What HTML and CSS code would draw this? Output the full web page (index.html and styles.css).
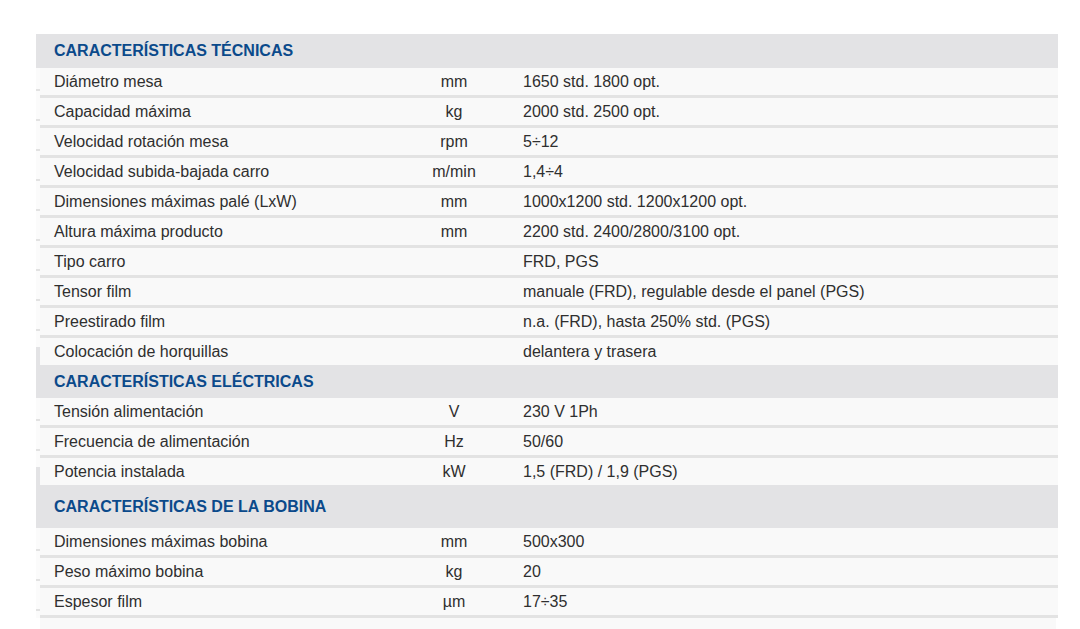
FILE: index.html
```html
<!DOCTYPE html>
<html lang="es">
<head>
<meta charset="utf-8">
<title>Características</title>
<link rel="stylesheet" href="styles.css">
</head>
<body>
<div class="spec">
  <div class="sec-head h1">CARACTERÍSTICAS TÉCNICAS</div>
  <div class="row"><span class="lab">Diámetro mesa</span><span class="unit">mm</span><span class="val">1650 std. 1800 opt.</span></div>
  <div class="row"><span class="lab">Capacidad máxima</span><span class="unit">kg</span><span class="val">2000 std. 2500 opt.</span></div>
  <div class="row"><span class="lab">Velocidad rotación mesa</span><span class="unit">rpm</span><span class="val">5÷12</span></div>
  <div class="row"><span class="lab">Velocidad subida-bajada carro</span><span class="unit">m/min</span><span class="val">1,4÷4</span></div>
  <div class="row"><span class="lab">Dimensiones máximas palé (LxW)</span><span class="unit">mm</span><span class="val">1000x1200 std. 1200x1200 opt.</span></div>
  <div class="row"><span class="lab">Altura máxima producto</span><span class="unit">mm</span><span class="val">2200 std. 2400/2800/3100 opt.</span></div>
  <div class="row"><span class="lab">Tipo carro</span><span class="unit"></span><span class="val">FRD, PGS</span></div>
  <div class="row"><span class="lab">Tensor film</span><span class="unit"></span><span class="val">manuale (FRD), regulable desde el panel (PGS)</span></div>
  <div class="row"><span class="lab">Preestirado film</span><span class="unit"></span><span class="val">n.a. (FRD), hasta 250% std. (PGS)</span></div>
  <div class="row last edge"><span class="lab">Colocación de horquillas</span><span class="unit"></span><span class="val">delantera y trasera</span></div>

  <div class="sec-head h2">CARACTERÍSTICAS ELÉCTRICAS</div>
  <div class="row"><span class="lab">Tensión alimentación</span><span class="unit">V</span><span class="val">230 V 1Ph</span></div>
  <div class="row"><span class="lab">Frecuencia de alimentación</span><span class="unit">Hz</span><span class="val">50/60</span></div>
  <div class="row last edge"><span class="lab">Potencia instalada</span><span class="unit">kW</span><span class="val">1,5 (FRD) / 1,9 (PGS)</span></div>

  <div class="sec-head h3">CARACTERÍSTICAS DE LA BOBINA</div>
  <div class="row"><span class="lab">Dimensiones máximas bobina</span><span class="unit">mm</span><span class="val">500x300</span></div>
  <div class="row"><span class="lab">Peso máximo bobina</span><span class="unit">kg</span><span class="val">20</span></div>
  <div class="row"><span class="lab">Espesor film</span><span class="unit">µm</span><span class="val">17÷35</span></div>
  <div class="tail"></div>
</div>
</body>
</html>
```

FILE: styles.css
```css
html, body {
  margin: 0;
  padding: 0;
  background: #ffffff;
}

body {
  font-family: "Liberation Sans", Arial, sans-serif;
  font-size: 16px;
  color: #2f2f2f;
}

.spec {
  margin: 34px 0 0 36px;
  width: 1022px;
}

.sec-head {
  background: #e3e3e5;
  color: #0b4a8b;
  font-weight: bold;
  padding-left: 18px;
  display: flex;
  align-items: center;
}

.h1 { height: 34px; }
.h2 { height: 33px; }
.h3 { height: 43px; }

.row {
  display: grid;
  grid-template-columns: 4px 364px 100px 1fr;
  height: 30px;
}

.row.last {
  height: 27px;
}

.row::before {
  content: "";
  background: linear-gradient(to bottom, #fbfbfb 0, #fbfbfb 21px, #e2e2e2 21px, #e2e2e2 23px, #fbfbfb 23px);
}

.row.edge::before {
  background: linear-gradient(to bottom, #fbfbfb 0, #fbfbfb 9px, #e3e3e5 9px);
}

.lab, .unit, .val {
  height: 27px;
  line-height: 27px;
  background: #f9f9f9;
  border-bottom: 3px solid #e3e3e3;
  white-space: nowrap;
}

.row.last .lab, .row.last .unit, .row.last .val {
  border-bottom: 0;
}

.lab { padding-left: 14px; }
.unit { text-align: center; }
.val { padding-left: 19px; }

.tail {
  height: 14px;
  margin: 0 2px 0 4px;
  background: #f9f9f9;
}
```
